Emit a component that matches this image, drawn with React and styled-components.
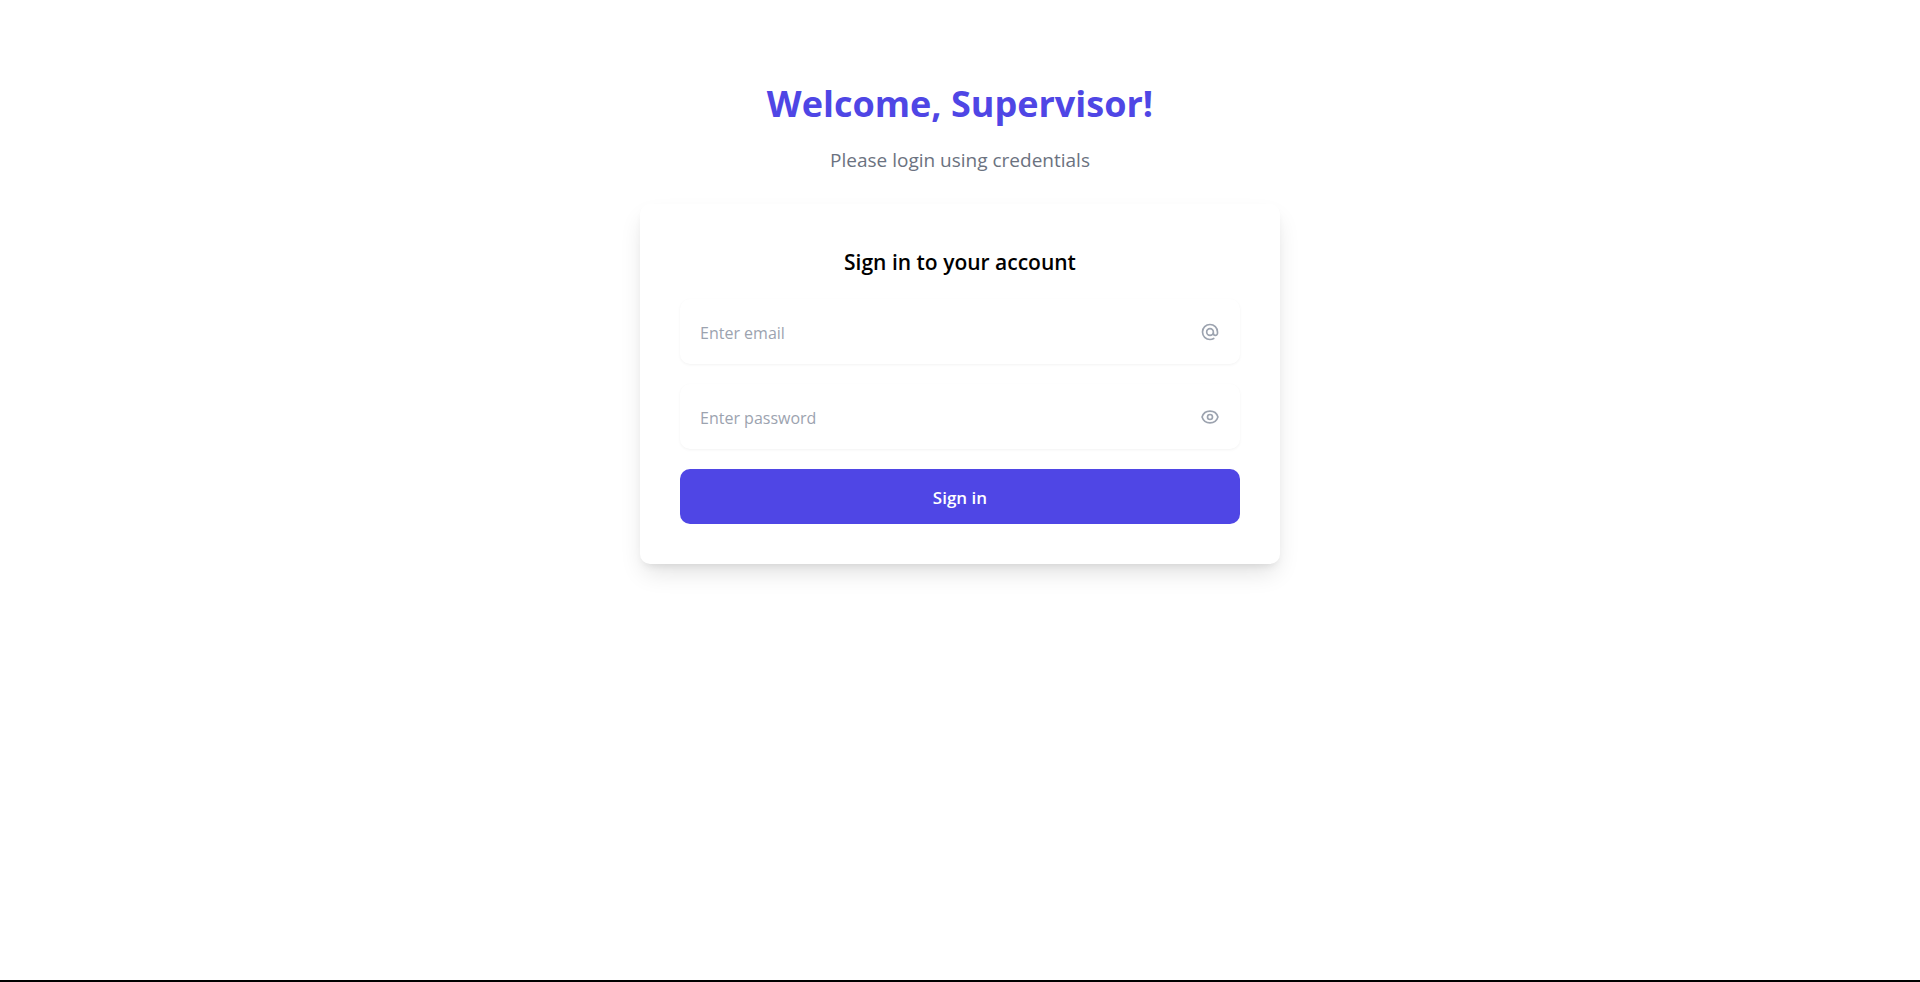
import React from "react";
import styled, { createGlobalStyle } from "styled-components";

const GlobalStyle = createGlobalStyle`
  *, *::before, *::after { box-sizing: border-box; }
  body {
    margin: 0;
    background: #fff;
    color: #000;
    font-family: "Segoe UI", "Open Sans", "Noto Sans", sans-serif;
  }
`;

const Page = styled.main`
  min-height: 100vh;
  padding: 80px 20px;
  border-bottom: 2px solid #000;
`;

const Container = styled.div`
  max-width: 640px;
  margin: 0 auto;
`;

const Title = styled.h1`
  margin: 0;
  font-size: 36px;
  line-height: 48px;
  font-weight: 700;
  text-align: center;
  color: #4f46e5;
`;

const Subtitle = styled.p`
  margin: 18px 0 0;
  font-size: 19px;
  line-height: 28px;
  text-align: center;
  color: #6b7280;
`;

const Card = styled.form`
  display: flex;
  flex-direction: column;
  gap: 20px;
  margin-top: 30px;
  padding: 40px;
  border-radius: 10px;
  background: #fff;
  box-shadow: 0 12px 24px -4px rgba(0, 0, 0, 0.12), 0 5px 8px -4px rgba(0, 0, 0, 0.1);
`;

const CardTitle = styled.h2`
  margin: 0;
  padding-top: 2px;
  font-size: 21px;
  line-height: 33px;
  font-weight: 600;
  text-align: center;
`;

const Field = styled.label`
  display: flex;
  align-items: center;
  gap: 20px;
  padding: 20px;
  border-radius: 10px;
  background: #fff;
  box-shadow: 0 1px 3px rgba(0, 0, 0, 0.05);
  color: #9ca3af;
`;

const Input = styled.input`
  flex: 1;
  min-width: 0;
  height: 25px;
  padding: 2px 0 0;
  border: 0;
  outline: 0;
  background: transparent;
  font-family: inherit;
  font-size: 16px;
  line-height: 23px;
  color: #000;

  &::placeholder {
    color: #9ca3af;
    opacity: 1;
  }
`;

const Icon = styled.svg`
  width: 20px;
  height: 20px;
  fill: none;
  stroke: currentColor;
  stroke-width: 2;
  stroke-linecap: round;
  stroke-linejoin: round;
`;

const SubmitButton = styled.button`
  padding: 16px 25px 14px;
  border: 0;
  border-radius: 10px;
  background: #4f46e5;
  color: #fff;
  font-family: inherit;
  font-size: 17px;
  line-height: 25px;
  font-weight: 600;
  cursor: pointer;
`;

export default function App() {
  return (
    <>
      <GlobalStyle />
      <Page>
        <Container>
          <Title>Welcome, Supervisor!</Title>
          <Subtitle>Please login using credentials</Subtitle>
          <Card onSubmit={(event) => event.preventDefault()}>
            <CardTitle>Sign in to your account</CardTitle>
            <Field>
              <Input type="email" aria-label="Email" placeholder="Enter email" />
              <Icon viewBox="0 0 24 24" aria-hidden="true">
                <path d="M16 12a4 4 0 10-8 0 4 4 0 008 0zm0 0v1.5a2.5 2.5 0 005 0V12a9 9 0 10-9 9m4.5-1.206a8.959 8.959 0 01-4.5 1.207" />
              </Icon>
            </Field>
            <Field>
              <Input type="password" aria-label="Password" placeholder="Enter password" />
              <Icon viewBox="0 0 24 24" aria-hidden="true">
                <path d="M15 12a3 3 0 11-6 0 3 3 0 016 0z" />
                <path d="M2.458 12C3.732 7.943 7.523 5 12 5c4.478 0 8.268 2.943 9.542 7-1.274 4.057-5.064 7-9.542 7-4.477 0-8.268-2.943-9.542-7z" />
              </Icon>
            </Field>
            <SubmitButton type="submit">Sign in</SubmitButton>
          </Card>
        </Container>
      </Page>
    </>
  );
}
